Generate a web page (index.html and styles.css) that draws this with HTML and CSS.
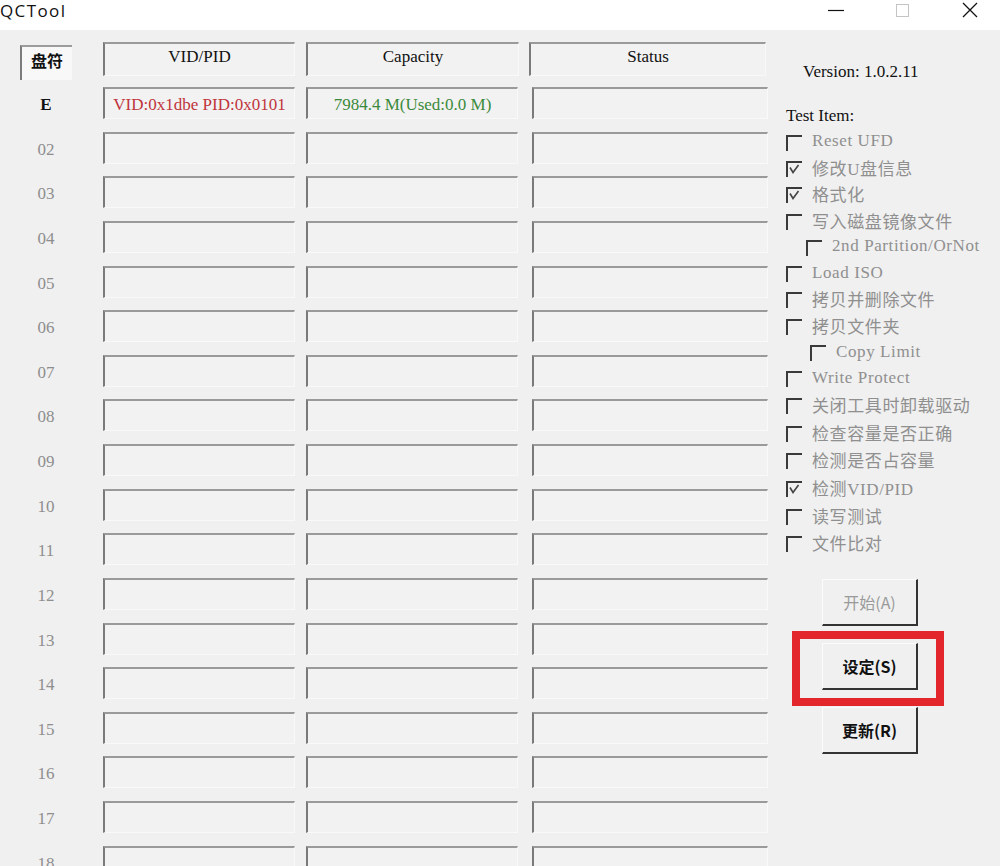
FILE: index.html
```html
<html>
<head>
	<title>QCTool</title>
	<link rel="stylesheet" href="styles.css">
</head>
<body>
	<div class="titlebar">
		<span class="title">QCTool</span>
		<div class="controls">
			<svg width="16" height="16" viewBox="0 0 16 16"><line x1="0" y1="8.5" x2="16" y2="8.5" stroke="#111" stroke-width="1.2"/></svg>
			<svg width="16" height="16" viewBox="0 0 16 16"><rect x="1.5" y="2.5" width="12" height="12" fill="none" stroke="#c4c4c4" stroke-width="1"/></svg>
			<svg width="16" height="16" viewBox="0 0 16 16"><path d="M1 1 L15 15 M15 1 L1 15" stroke="#111" stroke-width="1.3" fill="none"/></svg>
		</div>
	</div>

	<div class="main">
		<div class="table">
			<div class="row head">
				<div class="lbl head-lbl">盘符</div>
				<div class="cell vid">VID/PID</div>
				<div class="cell cap">Capacity</div>
				<div class="cell st">Status</div>
			</div>
			<div class="row">
				<div class="lbl drive">E</div>
				<div class="cell vid red">VID:0x1dbe PID:0x0101</div>
				<div class="cell cap green">7984.4 M(Used:0.0 M)</div>
				<div class="cell st"></div>
			</div>
			<div class="row"><div class="lbl">02</div><div class="cell vid"></div><div class="cell cap"></div><div class="cell st"></div></div>
			<div class="row"><div class="lbl">03</div><div class="cell vid"></div><div class="cell cap"></div><div class="cell st"></div></div>
			<div class="row"><div class="lbl">04</div><div class="cell vid"></div><div class="cell cap"></div><div class="cell st"></div></div>
			<div class="row"><div class="lbl">05</div><div class="cell vid"></div><div class="cell cap"></div><div class="cell st"></div></div>
			<div class="row"><div class="lbl">06</div><div class="cell vid"></div><div class="cell cap"></div><div class="cell st"></div></div>
			<div class="row"><div class="lbl">07</div><div class="cell vid"></div><div class="cell cap"></div><div class="cell st"></div></div>
			<div class="row"><div class="lbl">08</div><div class="cell vid"></div><div class="cell cap"></div><div class="cell st"></div></div>
			<div class="row"><div class="lbl">09</div><div class="cell vid"></div><div class="cell cap"></div><div class="cell st"></div></div>
			<div class="row"><div class="lbl">10</div><div class="cell vid"></div><div class="cell cap"></div><div class="cell st"></div></div>
			<div class="row"><div class="lbl">11</div><div class="cell vid"></div><div class="cell cap"></div><div class="cell st"></div></div>
			<div class="row"><div class="lbl">12</div><div class="cell vid"></div><div class="cell cap"></div><div class="cell st"></div></div>
			<div class="row"><div class="lbl">13</div><div class="cell vid"></div><div class="cell cap"></div><div class="cell st"></div></div>
			<div class="row"><div class="lbl">14</div><div class="cell vid"></div><div class="cell cap"></div><div class="cell st"></div></div>
			<div class="row"><div class="lbl">15</div><div class="cell vid"></div><div class="cell cap"></div><div class="cell st"></div></div>
			<div class="row"><div class="lbl">16</div><div class="cell vid"></div><div class="cell cap"></div><div class="cell st"></div></div>
			<div class="row"><div class="lbl">17</div><div class="cell vid"></div><div class="cell cap"></div><div class="cell st"></div></div>
			<div class="row"><div class="lbl">18</div><div class="cell vid"></div><div class="cell cap"></div><div class="cell st"></div></div>
		</div>

		<div class="side">
			<div class="version">Version: 1.0.2.11</div>
			<div class="test-title">Test Item:</div>

			<div class="group first">
				<div class="item"><span class="cb"></span>Reset UFD</div>
				<div class="item"><span class="cb on"><svg width="16" height="16" viewBox="0 0 16 16"><polyline points="4,6.5 7,11.5 12.5,4" fill="none" stroke="#444" stroke-width="1.6"/></svg></span>修改U盘信息</div>
				<div class="item"><span class="cb on"><svg width="16" height="16" viewBox="0 0 16 16"><polyline points="4,6.5 7,11.5 12.5,4" fill="none" stroke="#444" stroke-width="1.6"/></svg></span>格式化</div>
				<div class="item"><span class="cb"></span>写入磁盘镜像文件</div>
				<div class="item indent1"><span class="cb"></span>2nd Partition/OrNot</div>
				<div class="item"><span class="cb"></span>Load ISO</div>
				<div class="item"><span class="cb"></span>拷贝并删除文件</div>
				<div class="item"><span class="cb"></span>拷贝文件夹</div>
				<div class="item indent2"><span class="cb"></span>Copy Limit</div>
				<div class="item"><span class="cb"></span>Write Protect</div>
				<div class="item"><span class="cb"></span>关闭工具时卸载驱动</div>
			</div>

			<div class="group second">
				<div class="item"><span class="cb"></span>检查容量是否正确</div>
				<div class="item"><span class="cb"></span>检测是否占容量</div>
				<div class="item"><span class="cb on"><svg width="16" height="16" viewBox="0 0 16 16"><polyline points="4,6.5 7,11.5 12.5,4" fill="none" stroke="#444" stroke-width="1.6"/></svg></span>检测VID/PID</div>
				<div class="item"><span class="cb"></span>读写测试</div>
				<div class="item"><span class="cb"></span>文件比对</div>
			</div>

			<div class="buttons">
				<button class="btn off">开始(A)</button>
				<button class="btn">设定(S)</button>
				<button class="btn">更新(R)</button>
			</div>
		</div>
	</div>

	<div class="mark"></div>
</body>
</html>
```

FILE: styles.css
```css
body{
	margin: 0;
	width: 1000px;
	height: 866px;
	overflow: hidden;
	background-color: #f0f0f0;
	font-family: "Liberation Serif", "Noto Sans CJK SC", serif;
	font-size: 17px;
	color: #111;
}
.titlebar{
	height: 30px;
	background-color: #ffffff;
	display: flex;
	justify-content: space-between;
	align-items: flex-start;
}
.title{
	font-family: "Open Sans", "Noto Sans", sans-serif;
	font-size: 17px;
	line-height: 21px;
	letter-spacing: 1.4px;
	color: #111;
}
.controls{
	display: flex;
	gap: 51px;
	padding-top: 2px;
	margin-right: 22px;
}
.controls svg{
	display: block;
}
.main{
	display: flex;
	padding-left: 20px;
	padding-top: 12px;
}
.table{
	width: 748px;
}
.row{
	display: flex;
	height: 32px;
	margin-bottom: 12.625px;
}
.row.head{
	height: 34px;
	margin-bottom: 11px;
}
.lbl{
	width: 52px;
	margin-right: 31px;
	text-align: center;
	line-height: 36px;
	color: #8e8e8e;
}
.drive{
	color: #111;
	font-weight: bold;
}
.head-lbl{
	box-sizing: border-box;
	margin-top: 3px;
	height: 35px;
	line-height: 30px;
	color: #111;
	font-weight: bold;
	font-size: 16px;
	background-color: #f8f8f8;
	border-top: 2px solid #9c9c9c;
	border-left: 2px solid #7c7c7c;
}
.cell{
	box-sizing: border-box;
	height: 100%;
	background-color: #f2f2f2;
	border-top: 2px solid #9a9a9a;
	border-left: 2px solid #7a7a7a;
	border-right: 1px solid #f9f9f9;
	border-bottom: 1px solid #f9f9f9;
	text-align: center;
	line-height: 31px;
	white-space: nowrap;
}
.vid{
	width: 192px;
	margin-right: 11px;
}
.cap{
	width: 212px;
	margin-right: 14px;
}
.st{
	width: 236px;
}
.head .cell{
	line-height: 26px;
	color: #111;
}
.head .cap{
	width: 213px;
	margin-right: 10px;
}
.head .st{
	width: 237px;
}
.red{
	color: #c0343c;
}
.green{
	color: #3b8a3b;
}
.side{
	margin-left: 18px;
	width: 210px;
}
.version{
	padding-left: 17px;
	margin-top: 20px;
	line-height: 20px;
}
.test-title{
	margin-top: 24px;
	margin-bottom: 2px;
	line-height: 20px;
}
.item{
	display: flex;
	align-items: center;
	height: 26.3px;
	color: #8f8f8f;
	font-size: 17px;
	letter-spacing: 0.6px;
	white-space: nowrap;
}
.second{
	margin-top: 1px;
}
.second .item{
	height: 27.7px;
}
.indent1{
	margin-left: 20px;
}
.indent2{
	margin-left: 24px;
}
.cb{
	box-sizing: border-box;
	width: 16px;
	height: 16px;
	margin-top: 3px;
	margin-right: 10px;
	border-top: 2px solid #3a3a3a;
	border-left: 2px solid #3a3a3a;
	flex-shrink: 0;
	position: relative;
}
.cb svg{
	position: absolute;
	left: -2px;
	top: -2px;
}
.buttons{
	display: flex;
	flex-direction: column;
	margin-top: 22px;
	margin-left: 36px;
}
.btn{
	box-sizing: border-box;
	width: 96px;
	height: 47px;
	margin-bottom: 17px;
	background-color: #f0f0f0;
	border: none;
	border-top: 1px solid #fbfbfb;
	border-left: 1px solid #fbfbfb;
	border-right: 2px solid #333;
	border-bottom: 2px solid #333;
	font-family: "Noto Sans CJK SC", sans-serif;
	font-size: 16px;
	font-weight: bold;
	color: #111;
	padding: 0;
}
.btn.off{
	color: #9a9a9a;
	font-weight: normal;
}
.mark{
	position: absolute;
	left: 792px;
	top: 631px;
	width: 152px;
	height: 75px;
	box-sizing: border-box;
	border: 8px solid #e3262b;
}
```
